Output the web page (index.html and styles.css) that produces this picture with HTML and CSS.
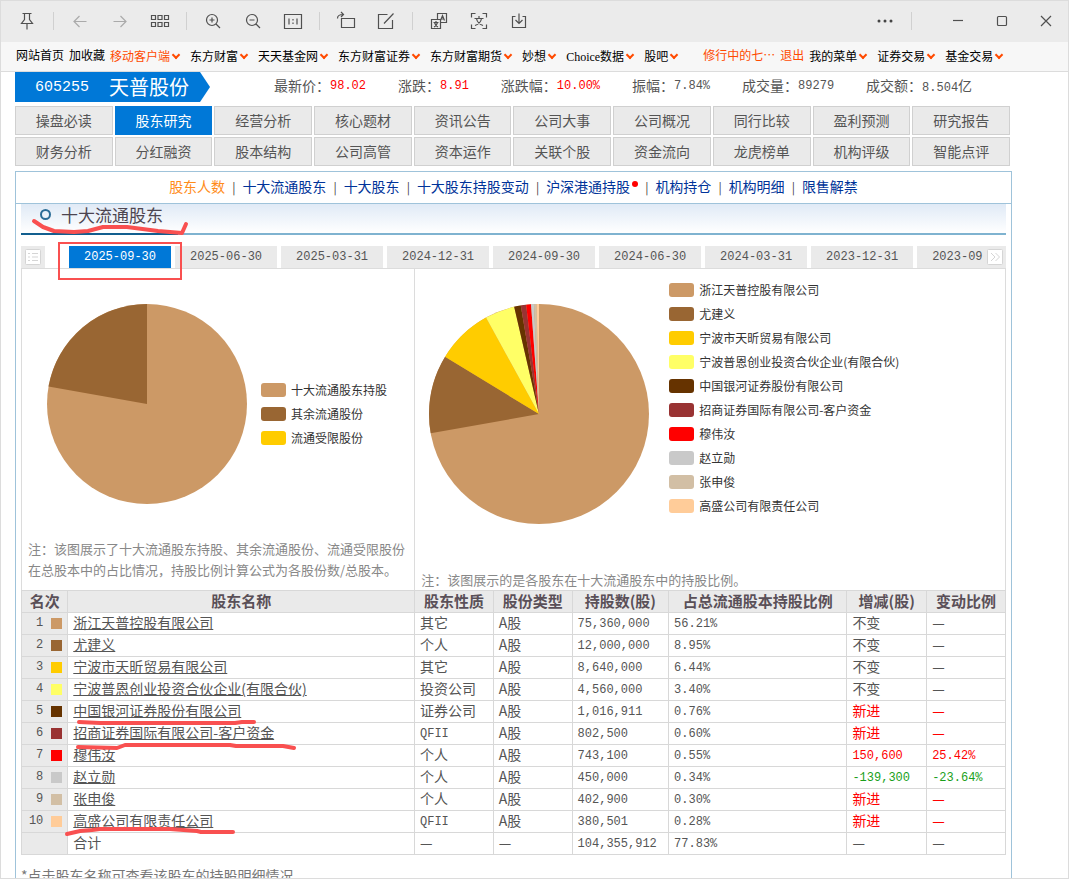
FILE: index.html
```html
<!DOCTYPE html>
<html lang="zh-CN">
<head>
<meta charset="utf-8">
<title>天普股份 605255 股东研究</title>
<link rel="stylesheet" href="styles.css">
</head>
<body>
<div class="window">
  <header class="toolbar">
    <button class="tool" aria-label="置顶"><svg width="20" height="20" viewBox="0 0 20 20"><path d="M5.500 2.500h9M7.500 2.500v6l-3 4h11l-3-4v-6M10 12.500v6"/></svg></button>
    <span class="divider"></span>
    <button class="tool tool-dim" aria-label="后退"><svg width="20" height="20" viewBox="0 0 20 20"><path d="M16.500 10.500H4M9.500 5l-5.500 5.500 5.500 5.500"/></svg></button>
    <button class="tool tool-dim" aria-label="前进"><svg width="20" height="20" viewBox="0 0 20 20"><path d="M3.500 10.500H16M10.500 5l5.500 5.500-5.500 5.500"/></svg></button>
    <button class="tool" aria-label="缩略图"><svg width="20" height="20" viewBox="0 0 20 20"><path d="M1.500 4.500h4v4h-4zM8 4.500h4v4H8zM14.500 4.500h4v4h-4zM1.500 11.500h4v4h-4zM8 11.500h4v4H8zM14.500 11.500h4v4h-4z"/></svg></button>
    <span class="divider"></span>
    <button class="tool" aria-label="放大"><svg width="20" height="20" viewBox="0 0 20 20"><circle cx="9" cy="9" r="5.500"/><path d="M13 13l4 4M6.500 9h5M9 6.500v5"/></svg></button>
    <button class="tool" aria-label="缩小"><svg width="20" height="20" viewBox="0 0 20 20"><circle cx="9" cy="9" r="5.500"/><path d="M13 13l4 4M6.500 9h5"/></svg></button>
    <button class="tool" aria-label="原始大小"><svg width="20" height="20" viewBox="0 0 20 20"><path d="M1.500 3.500h17v14h-17zM6 7.500v6M14 7.500v6M10 8v1.500M10 11.500V13"/></svg></button>
    <span class="divider"></span>
    <button class="tool" aria-label="旋转"><svg width="20" height="20" viewBox="0 0 20 20"><path d="M5.500 7.500h13v9h-13zM1.500 7.500c0-3 2-4 5.500-4M5 1l2.500 2.500L5 6"/></svg></button>
    <button class="tool" aria-label="编辑"><svg width="20" height="20" viewBox="0 0 20 20"><path d="M11.500 3.500h-9v14h14V9M8 12.500l9.500-10"/></svg></button>
    <span class="divider"></span>
    <button class="tool" aria-label="翻译"><svg width="20" height="20" viewBox="0 0 20 20"><path d="M8.500 8V2.500h9v9H12M2.500 8.500h9v9h-9zM11.500 9.500l2-5 2 5M12 8h3M4.500 11.500h5M7 10v1.500M5 16c2-1 3-2.500 3.500-4.500M5.500 11.500c0.500 2 1.500 3.500 3.500 4.500"/></svg></button>
    <button class="tool" aria-label="提取文字"><svg width="20" height="20" viewBox="0 0 20 20"><path d="M2.500 6.500v-4h4M13.500 2.500h4v4M17.500 13.500v4h-4M6.500 17.500h-4v-4M5.500 7.500h9M10 5v2.500M6 14.500c4-1.500 6-4 6.500-7M7.500 7.500c.5 3 2.500 5.500 6.500 7"/></svg></button>
    <button class="tool" aria-label="保存"><svg width="20" height="20" viewBox="0 0 20 20"><path d="M6.500 5.500h-3v11h13v-11h-3M10 2.500v10M6.500 9l3.500 3.500L13.500 9"/></svg></button>
    <button class="tool tool-more" aria-label="更多"><svg width="20" height="20" viewBox="0 0 20 20"><g class="solid"><circle cx="4" cy="10" r="1.500"/><circle cx="10" cy="10" r="1.500"/><circle cx="16" cy="10" r="1.500"/></g></svg></button>
    <span class="divider"></span>
    <div class="window-controls">
      <button class="tool" aria-label="最小化"><svg width="20" height="20" viewBox="0 0 20 20"><path d="M5 9.500h10"/></svg></button>
      <button class="tool" aria-label="最大化"><svg width="20" height="20" viewBox="0 0 20 20"><rect x="5.500" y="5.500" width="9" height="9" rx="1"/></svg></button>
      <button class="tool" aria-label="关闭"><svg width="20" height="20" viewBox="0 0 20 20"><path d="M5 5l10 10M15 5L5 15"/></svg></button>
    </div>
  </header>

  <nav class="site-nav">
    <div class="nav-group nav-tight">
      <a href="#">网站首页</a><a href="#">加收藏</a>
    </div>
    <div class="nav-group">
      <a href="#" class="has-menu accent">移动客户端</a>
      <a href="#" class="has-menu">东方财富</a>
      <a href="#" class="has-menu">天天基金网</a>
      <a href="#" class="has-menu">东方财富证券</a>
      <a href="#" class="has-menu">东方财富期货</a>
      <a href="#" class="has-menu">妙想</a>
      <a href="#" class="has-menu">Choice数据</a>
      <a href="#" class="has-menu">股吧</a>
    </div>
    <div class="nav-group nav-tight nav-user">
      <a href="#" class="accent">修行中的七⋯</a><a href="#" class="accent">退出</a>
    </div>
    <div class="nav-group">
      <a href="#" class="has-menu">我的菜单</a>
      <a href="#" class="has-menu">证券交易</a>
      <a href="#" class="has-menu">基金交易</a>
    </div>
  </nav>

  <main class="page">
    <section class="quote">
      <h1 class="stock"><span class="stock-code">605255</span><span>天普股份</span></h1>
      <dl class="figures">
        <div><dt>最新价：</dt><dd class="up">98.02</dd></div>
        <div><dt>涨跌：</dt><dd class="up">8.91</dd></div>
        <div><dt>涨跌幅：</dt><dd class="up">10.00%</dd></div>
        <div><dt>振幅：</dt><dd>7.84%</dd></div>
        <div><dt>成交量：</dt><dd>89279</dd></div>
        <div><dt>成交额：</dt><dd>8.504<span class="unit">亿</span></dd></div>
      </dl>
    </section>

    <nav class="sections">
      <a href="#">操盘必读</a><a href="#" class="current">股东研究</a><a href="#">经营分析</a><a href="#">核心题材</a><a href="#">资讯公告</a><a href="#">公司大事</a><a href="#">公司概况</a><a href="#">同行比较</a><a href="#">盈利预测</a><a href="#">研究报告</a>
      <a href="#">财务分析</a><a href="#">分红融资</a><a href="#">股本结构</a><a href="#">公司高管</a><a href="#">资本运作</a><a href="#">关联个股</a><a href="#">资金流向</a><a href="#">龙虎榜单</a><a href="#">机构评级</a><a href="#">智能点评</a>
    </nav>

    <div class="content">
      <nav class="anchors">
        <a href="#" class="current">股东人数</a><span>|</span><a href="#">十大流通股东</a><span>|</span><a href="#">十大股东</a><span>|</span><a href="#">十大股东持股变动</a><span>|</span><a href="#" class="is-new">沪深港通持股</a><span>|</span><a href="#">机构持仓</a><span>|</span><a href="#">机构明细</a><span>|</span><a href="#">限售解禁</a>
      </nav>

      <section class="holders">
        <h2 class="title"><span class="ring"></span>十大流通股东</h2>

        <div class="dates">
          <button class="date-list" aria-label="日期列表"><svg width="16" height="16" viewBox="0 0 16 16"><rect x="0.500" y="0.500" width="15" height="15" rx="1"/><path d="M3 4.500h2M7 4.500h6M3 8h2M7 8h6M3 11.500h2M7 11.500h6"/></svg></button>
          <div class="date-tabs">
            <button class="current">2025-09-30</button><button>2025-06-30</button><button>2025-03-31</button><button>2024-12-31</button><button>2024-09-30</button><button>2024-06-30</button><button>2024-03-31</button><button>2023-12-31</button><button>2023-09-30</button>
          </div>
          <button class="date-next" aria-label="更早日期"><svg width="16" height="16" viewBox="0 0 16 16"><rect x="0.500" y="0.500" width="15" height="15" rx="1"/><path d="M4 4l4 4-4 4M8.500 4l4 4-4 4"/></svg></button>
        </div>

        <div class="charts">
          <figure class="chart chart-share">
            <div class="plot">
              <svg class="pie" width="200" height="200" viewBox="-100 -100 200 200" role="img" aria-label="十大流通股东持股占比">
                <circle class="c1" r="100"/>
                <path class="c2" d="M0 0L-98.500 -17.400A100 100 0 0 1 0 -100Z"/>
              </svg>
              <ul class="legend">
                <li><i class="c1"></i>十大流通股东持股</li>
                <li><i class="c2"></i>其余流通股份</li>
                <li><i class="c3"></i>流通受限股份</li>
              </ul>
            </div>
            <figcaption>注：该图展示了十大流通股东持股、其余流通股份、流通受限股份<br>在总股本中的占比情况，持股比例计算公式为各股份数/总股本。</figcaption>
          </figure>
          <figure class="chart chart-top">
            <div class="plot">
              <svg class="pie" width="220" height="220" viewBox="-110 -110 220 220" role="img" aria-label="各股东在十大流通股东中的持股比例">
                <circle class="c1" r="110"/>
                <g class="arcs" transform="rotate(-90)">
                  <circle class="c2" r="55" pathLength="100" stroke-dasharray="11.50 100" stroke-dashoffset="-72.21"/>
                  <circle class="c3" r="55" pathLength="100" stroke-dasharray="8.28 100" stroke-dashoffset="-83.71"/>
                  <circle class="c4" r="55" pathLength="100" stroke-dasharray="4.37 100" stroke-dashoffset="-91.99"/>
                  <circle class="c5" r="55" pathLength="100" stroke-dasharray="0.98 100" stroke-dashoffset="-96.36"/>
                  <circle class="c6" r="55" pathLength="100" stroke-dasharray="0.77 100" stroke-dashoffset="-97.34"/>
                  <circle class="c7" r="55" pathLength="100" stroke-dasharray="0.71 100" stroke-dashoffset="-98.11"/>
                  <circle class="c8" r="55" pathLength="100" stroke-dasharray="0.43 100" stroke-dashoffset="-98.82"/>
                  <circle class="c9" r="55" pathLength="100" stroke-dasharray="0.39 100" stroke-dashoffset="-99.25"/>
                  <circle class="c10" r="55" pathLength="100" stroke-dasharray="0.36 100" stroke-dashoffset="-99.64"/>
                </g>
              </svg>
              <ul class="legend">
                <li><i class="c1"></i>浙江天普控股有限公司</li>
                <li><i class="c2"></i>尤建义</li>
                <li><i class="c3"></i>宁波市天昕贸易有限公司</li>
                <li><i class="c4"></i>宁波普恩创业投资合伙企业(有限合伙)</li>
                <li><i class="c5"></i>中国银河证券股份有限公司</li>
                <li><i class="c6"></i>招商证券国际有限公司-客户资金</li>
                <li><i class="c7"></i>穆伟汝</li>
                <li><i class="c8"></i>赵立勋</li>
                <li><i class="c9"></i>张申俊</li>
                <li><i class="c10"></i>高盛公司有限责任公司</li>
              </ul>
            </div>
            <figcaption>注：该图展示的是各股东在十大流通股东中的持股比例。</figcaption>
          </figure>
        </div>

        <table class="ranking">
          <colgroup><col class="w-rank"><col class="w-name"><col class="w-kind"><col class="w-kind"><col class="w-shares"><col class="w-ratio"><col class="w-change"><col class="w-kind"></colgroup>
          <thead>
            <tr><th>名次</th><th>股东名称</th><th>股东性质</th><th>股份类型</th><th>持股数(股)</th><th>占总流通股本持股比例</th><th>增减(股)</th><th>变动比例</th></tr>
          </thead>
          <tbody>
            <tr><th><span class="rank">1<i class="c1"></i></span></th><td><a href="#">浙江天普控股有限公司</a></td><td>其它</td><td>A股</td><td class="num">75,360,000</td><td class="num">56.21%</td><td>不变</td><td>—</td></tr>
            <tr><th><span class="rank">2<i class="c2"></i></span></th><td><a href="#">尤建义</a></td><td>个人</td><td>A股</td><td class="num">12,000,000</td><td class="num">8.95%</td><td>不变</td><td>—</td></tr>
            <tr><th><span class="rank">3<i class="c3"></i></span></th><td><a href="#">宁波市天昕贸易有限公司</a></td><td>其它</td><td>A股</td><td class="num">8,640,000</td><td class="num">6.44%</td><td>不变</td><td>—</td></tr>
            <tr><th><span class="rank">4<i class="c4"></i></span></th><td><a href="#">宁波普恩创业投资合伙企业(有限合伙)</a></td><td>投资公司</td><td>A股</td><td class="num">4,560,000</td><td class="num">3.40%</td><td>不变</td><td>—</td></tr>
            <tr><th><span class="rank">5<i class="c5"></i></span></th><td><a href="#">中国银河证券股份有限公司</a></td><td>证券公司</td><td>A股</td><td class="num">1,016,911</td><td class="num">0.76%</td><td class="up">新进</td><td class="up">—</td></tr>
            <tr><th><span class="rank">6<i class="c6"></i></span></th><td><a href="#">招商证券国际有限公司-客户资金</a></td><td class="num">QFII</td><td>A股</td><td class="num">802,500</td><td class="num">0.60%</td><td class="up">新进</td><td class="up">—</td></tr>
            <tr><th><span class="rank">7<i class="c7"></i></span></th><td><a href="#">穆伟汝</a></td><td>个人</td><td>A股</td><td class="num">743,100</td><td class="num">0.55%</td><td class="num up">150,600</td><td class="num up">25.42%</td></tr>
            <tr><th><span class="rank">8<i class="c8"></i></span></th><td><a href="#">赵立勋</a></td><td>个人</td><td>A股</td><td class="num">450,000</td><td class="num">0.34%</td><td class="num down">-139,300</td><td class="num down">-23.64%</td></tr>
            <tr><th><span class="rank">9<i class="c9"></i></span></th><td><a href="#">张申俊</a></td><td>个人</td><td>A股</td><td class="num">402,900</td><td class="num">0.30%</td><td class="up">新进</td><td class="up">—</td></tr>
            <tr><th><span class="rank">10<i class="c10"></i></span></th><td><a href="#">高盛公司有限责任公司</a></td><td class="num">QFII</td><td>A股</td><td class="num">380,501</td><td class="num">0.28%</td><td class="up">新进</td><td class="up">—</td></tr>
            <tr><th></th><td>合计</td><td>—</td><td>—</td><td class="num">104,355,912</td><td class="num">77.83%</td><td>—</td><td>—</td></tr>
          </tbody>
        </table>
        <p class="hint">*点击股东名称可查看该股东的持股明细情况</p>
      </section>
    </div>
  </main>

  <svg class="markup" width="320" height="860" viewBox="0 0 320 860" aria-hidden="true">
    <rect x="59" y="243" width="122" height="36"/>
    <g class="pen">
      <path d="M34 221L43 227L54 231L74 232L88 231L103 227H127L158 231L182 233L186 224"/>
      <path d="M79 722L100 723H235L242 722H254"/>
      <path d="M78 747L117 748L125 745H230L236 746H283L294 748"/>
      <path d="M67 834L80 831L92 830L100 829H170L197 831L201 832H233"/>
    </g>
  </svg>
</div>
</body>
</html>
```

FILE: styles.css
```css
* {
  box-sizing: border-box;
}

body {
  margin: 0;
  font: 14px/20px "Noto Sans CJK SC", sans-serif;
  color: #555;
}

a {
  color: inherit;
  text-decoration: none;
}

button {
  margin: 0;
  padding: 0;
  border: 0;
  background: none;
  font: inherit;
  color: inherit;
}

h1, h2, p, dl, dd, ul, figure {
  margin: 0;
  padding: 0;
}

ul {
  list-style: none;
}

.window {
  position: relative;
  display: flex;
  flex-direction: column;
  height: 100vh;
  overflow: hidden;
  border: 1px solid #dcdcdc;
  background: #fff;
}

/* window toolbar */
.toolbar {
  display: flex;
  flex: none;
  align-items: center;
  height: 41px;
  padding: 0 0 1px 6px;
  background: #ebebeb;
}

.tool {
  display: flex;
  align-items: center;
  justify-content: center;
  width: 40px;
  height: 40px;
}

.tool svg {
  fill: none;
  stroke: #505050;
  stroke-width: 1.2;
}

.tool .solid {
  fill: #444;
  stroke: none;
}

.tool-dim svg {
  stroke: #aaa;
}

.tool-more {
  margin-left: auto;
}

.divider {
  width: 1px;
  height: 18px;
  margin: 0 6px;
  background: #d0d0d0;
}

.window-controls {
  display: flex;
  margin-left: 18px;
}

.window-controls .tool {
  width: 44px;
}

/* site navigation */
.site-nav {
  display: flex;
  flex: none;
  gap: 5px;
  height: 30px;
  padding-left: 15px;
  border-bottom: 1px solid #dcdcdc;
  background: #f7f7f7;
  font: 12px/28px "Liberation Serif", "Noto Sans CJK SC", serif;
  color: #000;
  white-space: nowrap;
}

.nav-group {
  display: flex;
  gap: 10px;
}

.nav-tight {
  gap: 5px;
}

.nav-user {
  margin-left: 20px;
}

.accent {
  color: #ff4a00;
}

.has-menu {
  display: flex;
  align-items: center;
  gap: 2px;
}

.has-menu::after {
  content: "";
  box-sizing: border-box;
  width: 6px;
  height: 6px;
  margin: 0 1px 4px;
  border: solid #ff4a00;
  border-width: 0 2px 2px 0;
  transform: rotate(45deg);
}

/* page */
.page {
  display: flex;
  flex: 1 0 auto;
  flex-direction: column;
  padding: 0 56px 0 14px;
}

.quote {
  display: flex;
  align-items: center;
  gap: 64px;
  height: 30px;
}

.stock {
  display: flex;
  align-items: center;
  gap: 20px;
  height: 30px;
  padding: 0 21px 0 20px;
  background: #0078d7;
  clip-path: polygon(0 0, calc(100% - 10px) 0, 100% 50%, calc(100% - 10px) 100%, 0 100%);
  color: #fff;
  font-size: 20px;
  font-weight: 400;
  white-space: nowrap;
}

.stock-code {
  font: 15px "Liberation Mono", monospace;
}

.figures {
  display: flex;
  gap: 32px;
  white-space: nowrap;
}

.figures div {
  display: flex;
}

.figures dd {
  font: 12px/22px "Liberation Mono", monospace;
}

.figures .unit {
  font: 14px/20px "Noto Sans CJK SC", sans-serif;
}

.up {
  color: #f00;
}

.down {
  color: #1a9f1a;
}

.sections {
  display: grid;
  grid-template-columns: repeat(10, 1fr);
  gap: 2px;
  padding: 4px 2px 5px 0;
}

.sections a {
  height: 29px;
  border: 1px solid #d0d0d0;
  background: #eaeaea;
  line-height: 26px;
  text-align: center;
}

.sections .current {
  border-color: #0078d7;
  background: #0078d7;
  color: #fff;
}

.content {
  flex: 1;
  border: 1px solid #9fc3da;
  border-bottom: 0;
}

.anchors {
  display: flex;
  justify-content: center;
  gap: 7px;
  height: 32px;
  border-bottom: 1px solid #9fc3da;
  color: #039;
  line-height: 29px;
  white-space: nowrap;
}

.anchors span {
  color: #444;
  font-size: 12px;
}

.anchors .current {
  color: #ff8c1a;
}

.is-new {
  display: flex;
  gap: 2px;
}

.is-new::after {
  content: "";
  width: 6px;
  height: 6px;
  margin-top: 9px;
  border-radius: 50%;
  background: #f00;
}

.holders {
  padding: 0 5px;
}

/* section heading */
.title {
  display: flex;
  align-items: center;
  gap: 10px;
  height: 31px;
  padding: 0 0 8px 19px;
  border-bottom: 2px solid;
  border-image: linear-gradient(to right, #125f8f 158px, #7fb3d0 158px) 1;
  background: linear-gradient(#e0eaf6, #fff);
  color: #4d4550;
  font-size: 17px;
  font-weight: 400;
}

.ring {
  width: 11px;
  height: 11px;
  border: 2px solid #2b6c96;
  border-radius: 50%;
}

/* date tabs */
.dates {
  display: flex;
  height: 23px;
  margin-top: 11px;
  border-bottom: 1px solid #dcdcdc;
  font: 12px/22px "Liberation Mono", monospace;
}

.date-list,
.date-next {
  display: flex;
  flex: none;
  align-items: center;
  justify-content: center;
  width: 24px;
  background: #eaeaea;
}

.date-next {
  width: 22px;
}

.dates svg {
  fill: #fff;
  stroke: #d5d5d5;
}

.date-tabs {
  display: flex;
  flex: 1;
  gap: 4px;
  min-width: 0;
  margin-left: 24px;
  overflow: hidden;
}

.date-tabs button {
  flex: none;
  padding: 0 15px;
  background: #eaeaea;
}

.date-tabs .current {
  background: #0078d7;
  color: #fff;
}

/* charts */
.charts {
  display: grid;
  grid-template-columns: 2fr 3fr;
  border: solid #dcdcdc;
  border-width: 0 1px;
}

.chart {
  display: flex;
  flex-direction: column;
  justify-content: space-between;
  min-height: 321px;
}

.chart-share {
  padding-bottom: 10px;
  border-right: 1px solid #dcdcdc;
}

.plot {
  display: flex;
  align-items: flex-start;
}

.pie {
  flex: none;
  margin-top: 35px;
}

.chart-share .plot {
  gap: 14px;
  padding-left: 25px;
}

.chart-share .legend {
  padding-top: 109px;
}

.chart-top .plot {
  gap: 20px;
  padding-left: 14px;
}

.chart-top .legend {
  padding-top: 9px;
}

.arcs circle {
  fill: none;
  stroke-width: 110;
}

.legend li {
  display: flex;
  align-items: center;
  gap: 5px;
  height: 24px;
  color: #333;
  font-size: 12px;
  white-space: nowrap;
}

.legend i {
  width: 25px;
  height: 14px;
  border-radius: 3px;
}

figcaption {
  padding-left: 6px;
  color: #888;
  font-size: 13px;
  line-height: 21px;
  white-space: nowrap;
}

.c1 { background: #c96; fill: #c96; stroke: #c96; }
.c2 { background: #963; fill: #963; stroke: #963; }
.c3 { background: #fc0; fill: #fc0; stroke: #fc0; }
.c4 { background: #ff6; fill: #ff6; stroke: #ff6; }
.c5 { background: #630; fill: #630; stroke: #630; }
.c6 { background: #933; fill: #933; stroke: #933; }
.c7 { background: #f00; fill: #f00; stroke: #f00; }
.c8 { background: #c9c9c9; fill: #c9c9c9; stroke: #c9c9c9; }
.c9 { background: #d2bfa5; fill: #d2bfa5; stroke: #d2bfa5; }
.c10 { background: #fc9; fill: #fc9; stroke: #fc9; }

.pie > .c1,
.pie > .c2 {
  stroke: none;
}

/* ranking table */
.ranking {
  width: 100%;
  border-collapse: collapse;
  table-layout: fixed;
  white-space: nowrap;
}

.w-rank { width: 4.7%; }
.w-name { width: 35.2%; }
.w-kind { width: 8%; }
.w-shares { width: 9.8%; }
.w-ratio { width: 18.1%; }
.w-change { width: 8.1%; }

.ranking th,
.ranking td {
  height: 22px;
  padding: 0 5px 2px;
  border: 1px solid #d8d8d8;
  line-height: 19px;
}

.ranking td {
  text-align: left;
}

.ranking th {
  padding: 0 0 2px;
  background: #eaeaea;
}

.ranking tbody th {
  padding: 0;
}

.ranking thead th {
  color: #5a5058;
  font-size: 15px;
}

.ranking td.num {
  padding: 1px 5px 0;
  font: 12px/20px "Liberation Mono", monospace;
}

.ranking td a {
  text-decoration: underline;
}

.rank {
  display: flex;
  align-items: center;
  justify-content: flex-end;
  gap: 8px;
  padding-right: 5px;
  font: 12px/21px "Liberation Mono", monospace;
}

.rank i {
  width: 11px;
  height: 11px;
}

.hint {
  padding-top: 10px;
  color: #777;
}

/* hand-drawn marks over the page */
.markup {
  position: absolute;
  top: -1px;
  left: -1px;
  fill: none;
  stroke: #f95050;
  stroke-width: 2;
  pointer-events: none;
}

.pen {
  stroke-width: 4;
  stroke-linecap: round;
  stroke-linejoin: round;
}
```
